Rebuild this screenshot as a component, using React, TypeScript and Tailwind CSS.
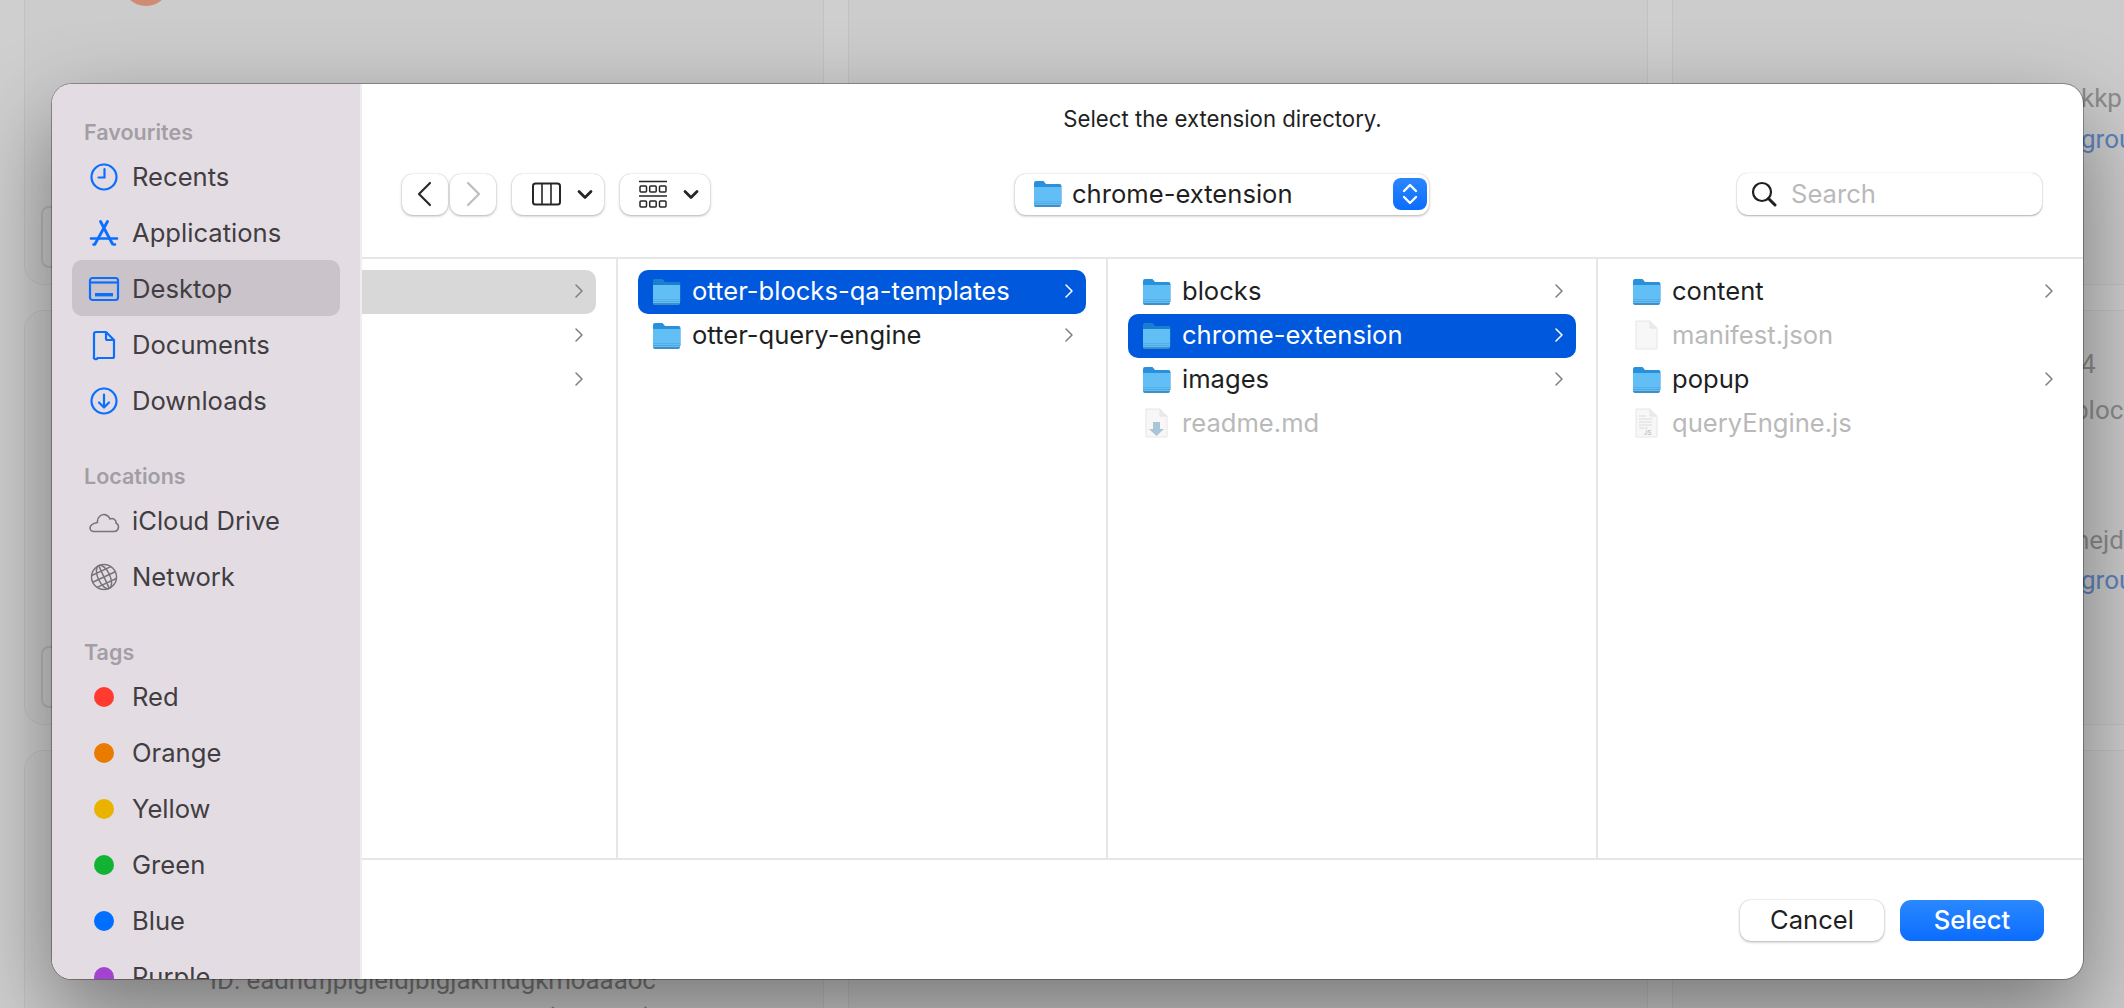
import type { ReactNode } from 'react'

// Finder-style "Select" sheet over a dimmed extensions page

const favourites = [
  { label: 'Recents', icon: <ClockIcon /> },
  { label: 'Applications', icon: <AppsIcon /> },
  { label: 'Desktop', icon: <DesktopIcon />, active: true },
  { label: 'Documents', icon: <DocIcon /> },
  { label: 'Downloads', icon: <DownloadIcon /> },
]

const locations = [
  { label: 'iCloud Drive', icon: <CloudIcon /> },
  { label: 'Network', icon: <GlobeIcon /> },
]

const tags = [
  { label: 'Red', dot: 'bg-[#ff3b30]' },
  { label: 'Orange', dot: 'bg-[#e87b00]' },
  { label: 'Yellow', dot: 'bg-[#e9b300]' },
  { label: 'Green', dot: 'bg-[#12b332]' },
  { label: 'Blue', dot: 'bg-[#006fff]' },
  { label: 'Purple', dot: 'bg-[#a343d0]' },
]

function ClockIcon() {
  return (
    <svg width="32" height="32" viewBox="0 0 32 32" fill="none" stroke="#0a6fff" strokeWidth="2.2" strokeLinecap="round">
      <circle cx="16" cy="16" r="12.5" />
      <path d="M16.5 8v8.5H10.5" />
    </svg>
  )
}

function AppsIcon() {
  return (
    <svg width="32" height="32" viewBox="0 0 32 32" fill="none" stroke="#0a6fff" strokeLinecap="round">
      <path d="M12.5 4.5 24.5 27M19.500 4.500 7 27" strokeWidth="2.8" />
      <path d="M3 21.5h26" strokeWidth="2.6" />
      <path d="M5.5 27.5h1M26 27.5h1" strokeWidth="2.6" />
    </svg>
  )
}

function DesktopIcon() {
  return (
    <svg width="32" height="32" viewBox="0 0 32 32" fill="none" stroke="#0a6fff" strokeWidth="2.2">
      <rect x="2" y="5" width="28" height="22" rx="2.5" />
      <path d="M2 9.5h28" />
      <rect x="7" y="20" width="18" height="3.4" fill="#0a6fff" stroke="none" />
    </svg>
  )
}

function DocIcon() {
  return (
    <svg width="32" height="32" viewBox="0 0 32 32" fill="none" stroke="#0a6fff" strokeWidth="2.2" strokeLinejoin="round">
      <path d="M8 3h10l8 8v16.5a1.5 1.5 0 0 1-1.5 1.5h-15A1.5 1.5 0 0 1 6 27.5V5a2 2 0 0 1 2-2Z" />
      <path d="M18 3v6.500a1.500 1.500 0 0 0 1.500 1.500H26" />
    </svg>
  )
}

function DownloadIcon() {
  return (
    <svg width="32" height="32" viewBox="0 0 32 32" fill="none" stroke="#0a6fff" strokeWidth="2.2" strokeLinecap="round" strokeLinejoin="round">
      <circle cx="16" cy="16" r="12.5" />
      <path d="M16 9.500v12.500M11 17.500l5 5 5-5" />
    </svg>
  )
}

function CloudIcon() {
  return (
    <svg width="32" height="32" viewBox="0 0 32 32" fill="none" stroke="#77747a" strokeWidth="1.6" strokeLinejoin="round">
      <path d="M6 26.500h20a4.500 4.500 0 0 0 2-8.500c.4-3.500-3.500-5.500-6-4-1.400-4.200-6.500-5.800-10-3-2 1.600-2.800 4-2.500 6.500C7 18 2 19.500 2 23a3.800 3.800 0 0 0 4 3.500Z" />
    </svg>
  )
}

function GlobeIcon() {
  return (
    <svg width="32" height="32" viewBox="0 0 32 32" fill="none" stroke="#77747a" strokeWidth="1.5">
      <circle cx="16" cy="16" r="12.5" />
      <g transform="rotate(-25 16 16)">
        <ellipse cx="16" cy="16" rx="6" ry="12.5" />
        <path d="M16 3.500v25M3.500 16h25M5.500 9.500h21M5.500 22.500h21" />
      </g>
    </svg>
  )
}

function FolderIcon({ selected = false }: { selected?: boolean }) {
  return (
    <svg width="29" height="27" viewBox="0 0 29 27" className="shrink-0">
      <path d="M1 3a2 2 0 0 1 2-2h7.500l2.500 3h13.500a2 2 0 0 1 2 2v18H1Z" fill={selected ? '#1b7fd0' : '#2a90dc'} />
      <path d="M1 7h27v17.500a2 2 0 0 1-2 2H3a2 2 0 0 1-2-2Z" fill="#62bff6" />
      <rect x="1" y="21" width="27" height="1" fill="#55b0e8" />
      <rect x="1" y="23" width="27" height="1" fill="#4fa8e0" />
      <path d="M1 25h27a2 2 0 0 1-2 2H3a2 2 0 0 1-2-2Z" fill="#3f8fc6" />
    </svg>
  )
}

function FileIcon({ kind }: { kind: 'plain' | 'md' | 'js' }) {
  return (
    <svg width="29" height="30" viewBox="0 0 29 30" className="shrink-0">
      <path d="M4 1h14l7 7v21H4Z" fill="#f7f7f7" stroke="#e6e6e6" />
      <path d="M18 1v7h7" fill="#ececec" stroke="#e2e2e2" />
      {kind === 'md' && <path d="M11 14h7v7h4l-7.500 7L7 21h4Z" fill="#a9c5d6" />}
      {kind === 'js' && (
        <>
          <path d="M7 8h7M7 11h13M7 14h13M7 17h13M7 20h9" stroke="#dcdcdc" strokeWidth="1" />
          <text x="12" y="27" fontSize="6" fill="#a8a8a8" fontFamily="Inter, sans-serif">JS</text>
        </>
      )}
    </svg>
  )
}

function Chevron({ color = '#7f7f7f' }: { color?: string }) {
  return (
    <svg width="10" height="16" viewBox="0 0 10 16" fill="none" stroke={color} strokeWidth="1.500" strokeLinecap="round" strokeLinejoin="round" className="shrink-0">
      <path d="M2 2l6 6-6 6" />
    </svg>
  )
}

function ToolButton({ className, children }: { className: string; children: ReactNode }) {
  return (
    <div className={`flex h-[41px] items-center rounded-[11px] bg-white shadow-[0_1px_3px_rgba(0,0,0,0.3),0_0_1px_rgba(0,0,0,0.2)] ${className}`}>
      {children}
    </div>
  )
}

const smallChevron = (
  <svg width="16" height="11" viewBox="0 0 16 11" fill="none" stroke="#262626" strokeWidth="2.800" strokeLinecap="round" strokeLinejoin="round">
    <path d="M2 2.500l6 6 6-6" />
  </svg>
)

function SideRow({ label, icon, active }: { label: string; icon: ReactNode; active?: boolean }) {
  return (
    <div className={`flex h-[56px] items-center gap-3 rounded-[10px] pl-4 pt-[2px] text-[25.6px] text-[#413d42] ${active ? 'bg-[#cac3c9]' : ''}`}>
      <span className="flex w-8 shrink-0 items-center justify-center">{icon}</span>
      {label}
    </div>
  )
}

function SideLabel({ children, first }: { children: ReactNode; first?: boolean }) {
  return (
    <div className={`mb-[2px] flex h-[30px] items-center pl-3 pt-[2px] text-[21.5px] font-semibold text-[#a39ea5] ${first ? '' : 'mt-8'}`}>
      {children}
    </div>
  )
}

type Item = { name: string; folder?: boolean; file?: 'plain' | 'md' | 'js'; selected?: boolean }

function FileRow({ item }: { item: Item }) {
  const textColor = item.selected ? 'text-white' : item.folder ? 'text-[#1f1f1f]' : 'text-[#b9b9b9]'
  return (
    <div className={`flex h-[44px] items-center rounded-[10px] pb-[2px] pl-[14px] pr-3 text-[25.6px] ${textColor} ${item.selected ? 'bg-[#0058dd]' : ''}`}>
      {item.folder ? <FolderIcon selected={item.selected} /> : <FileIcon kind={item.file ?? 'plain'} />}
      <span className="ml-[11px] flex-1 whitespace-nowrap">{item.name}</span>
      {item.folder && <Chevron color={item.selected ? '#ffffff' : '#7f7f7f'} />}
    </div>
  )
}

function Column({ items, className }: { items: Item[]; className: string }) {
  return (
    <div className={`pt-[11px] ${className}`}>
      {items.map((item) => (
        <FileRow key={item.name} item={item} />
      ))}
    </div>
  )
}

function Sheet() {
  return (
    <div className="absolute left-[52px] top-[84px] flex h-[895px] w-[2031px] overflow-hidden rounded-[20px] bg-white shadow-[0_0_0_1px_rgba(0,0,0,0.3)] [font-family:Inter,sans-serif]">
      {/* Sidebar */}
      <div className="w-[308px] shrink-0 overflow-hidden bg-[#e3dde3] px-5 pt-8">
        <SideLabel first>Favourites</SideLabel>
        {favourites.map((row) => (
          <SideRow key={row.label} {...row} />
        ))}
        <SideLabel>Locations</SideLabel>
        {locations.map((row) => (
          <SideRow key={row.label} {...row} />
        ))}
        <SideLabel>Tags</SideLabel>
        {tags.map((tag) => (
          <SideRow
            key={tag.label}
            label={tag.label}
            icon={<span className={`h-5 w-5 rounded-full ${tag.dot}`} />}
          />
        ))}
      </div>

      {/* Main */}
      <div className="flex min-w-0 flex-1 flex-col border-l-2 border-[#eeeeee]">
        <div className="h-[175px] shrink-0 border-b-2 border-[#e6e6e6]">
          <div className="flex h-[89px] items-start justify-center pt-[18px] text-[22.2px] text-[#1f1f1f]">
            Select the extension directory.
          </div>
          <div className="grid grid-cols-[1fr_414px_1fr] items-center pl-[40px] pr-[41px]">
            <div className="flex">
              <ToolButton className="w-[46px] justify-center">
                <svg width="18" height="26" viewBox="0 0 18 26" fill="none" stroke="#2a2a2a" strokeWidth="2.200" strokeLinecap="round" strokeLinejoin="round">
                  <path d="M14 2 3 13l11 11" />
                </svg>
              </ToolButton>
              <ToolButton className="ml-[2px] w-[46px] justify-center">
                <svg width="18" height="26" viewBox="0 0 18 26" fill="none" stroke="#bdbdbd" strokeWidth="2.200" strokeLinecap="round" strokeLinejoin="round">
                  <path d="m4 2 11 11L4 24" />
                </svg>
              </ToolButton>
              <ToolButton className="ml-4 w-[92px] gap-[16px] pl-[20px]">
                <svg width="29" height="24" viewBox="0 0 29 24" fill="none" stroke="#262626" strokeWidth="2">
                  <rect x="1" y="1.500" width="27" height="21" rx="2.500" />
                  <path d="M10 1.500v21M19 1.500v21" strokeWidth="1.600" />
                </svg>
                {smallChevron}
              </ToolButton>
              <ToolButton className="ml-4 w-[90px] gap-4 pl-[19px]">
                <svg width="28" height="28" viewBox="0 0 28 28" fill="none" stroke="#262626">
                  <path d="M0 1.500h28M0 16h28" strokeWidth="1.700" />
                  <g strokeWidth="1.500">
                    <rect x="1" y="6" width="6.500" height="6" rx="1" />
                    <rect x="10.700" y="6" width="6.500" height="6" rx="1" />
                    <rect x="20.500" y="6" width="6.500" height="6" rx="1" />
                    <rect x="1" y="21" width="6.500" height="6" rx="1" />
                    <rect x="10.700" y="21" width="6.500" height="6" rx="1" />
                    <rect x="20.500" y="21" width="6.500" height="6" rx="1" />
                  </g>
                </svg>
                {smallChevron}
              </ToolButton>
            </div>

            {/* Path pop-up */}
            <ToolButton className="justify-between pl-[18px] pr-[2px]">
              <span className="flex items-center gap-[10px] text-[25.6px] text-[#1f1f1f]">
                <FolderIcon />
                chrome-extension
              </span>
              <span className="flex h-8 w-[34px] items-center justify-center rounded-[8px] bg-gradient-to-b from-[#2a86ff] to-[#0a6cff]">
                <svg width="18" height="26" viewBox="0 0 18 26" fill="none" stroke="#ffffff" strokeWidth="2.400" strokeLinecap="round" strokeLinejoin="round">
                  <path d="M3 10l6-6 6 6M3 16l6 6 6-6" />
                </svg>
              </span>
            </ToolButton>

            <div className="flex justify-end">
              <div className="flex h-[42px] w-[305px] items-center gap-[14px] rounded-[11px] bg-white pl-[14px] shadow-[0_1px_2px_rgba(0,0,0,0.3),0_0_1px_rgba(0,0,0,0.25)]">
                <svg width="26" height="26" viewBox="0 0 26 26" fill="none" stroke="#1f1f1f" strokeLinecap="round">
                  <circle cx="11" cy="11" r="9" strokeWidth="2.200" />
                  <path d="m17.500 17.500 6.500 6.500" strokeWidth="3" />
                </svg>
                <span className="text-[25.6px] text-[#b9b9b9]">Search</span>
              </div>
            </div>
          </div>
        </div>

        {/* Browser columns */}
        <div className="flex min-h-0 flex-1">
          <div className="w-[256px] shrink-0 border-r-2 border-[#e6e6e6] pr-5 pt-[11px]">
            <div className="flex h-[44px] items-center justify-end rounded-r-[10px] bg-[#d8d8d8] pb-[2px] pr-3">
              <Chevron />
            </div>
            <div className="flex h-[44px] items-center justify-end pb-[2px] pr-3">
              <Chevron />
            </div>
            <div className="flex h-[44px] items-center justify-end pb-[2px] pr-3">
              <Chevron />
            </div>
          </div>
          <Column
            className="w-[490px] shrink-0 border-r-2 border-[#e6e6e6] px-5"
            items={[
              { name: 'otter-blocks-qa-templates', folder: true, selected: true },
              { name: 'otter-query-engine', folder: true },
            ]}
          />
          <Column
            className="w-[490px] shrink-0 border-r-2 border-[#e6e6e6] px-5"
            items={[
              { name: 'blocks', folder: true },
              { name: 'chrome-extension', folder: true, selected: true },
              { name: 'images', folder: true },
              { name: 'readme.md', file: 'md' },
            ]}
          />
          <Column
            className="flex-1 pl-5 pr-[17px]"
            items={[
              { name: 'content', folder: true },
              { name: 'manifest.json', file: 'plain' },
              { name: 'popup', folder: true },
              { name: 'queryEngine.js', file: 'js' },
            ]}
          />
        </div>

        {/* Footer */}
        <div className="flex h-[121px] shrink-0 items-start justify-end gap-4 border-t-2 border-[#e6e6e6] pr-[39px] pt-[40px] text-[25.6px]">
          <button className="h-[41px] w-[144px] rounded-[11px] bg-white text-[#1f1f1f] shadow-[0_1px_3px_rgba(0,0,0,0.3),0_0_1px_rgba(0,0,0,0.25)]">
            Cancel
          </button>
          <button className="h-[41px] w-[144px] rounded-[11px] bg-gradient-to-b from-[#2a88ff] to-[#0a6cff] font-medium text-white">
            Select
          </button>
        </div>
      </div>
    </div>
  )
}

function PageCard({ className = '', children }: { className?: string; children?: ReactNode }) {
  return (
    <div className={`flex h-[415px] flex-col overflow-hidden rounded-[20px] border border-[#c2c2c2] bg-[#cccccc] ${className}`}>
      {children}
    </div>
  )
}

const cardButton = <div className="ml-4 mt-auto mb-[16px] h-[62px] w-[150px] shrink-0 rounded-[8px] border-2 border-[#b8b8b8]" />

export default function App() {
  return (
    <div className="relative h-[1008px] w-[2124px] overflow-hidden bg-[#cfcfcf] [font-family:Roboto,sans-serif]">
      {/* Dimmed page behind the sheet */}
      <div className="-mt-[130px] grid w-[2472px] grid-cols-[800px_800px_800px] gap-x-6 gap-y-[25px] pl-6">
        <PageCard>
          <div className="ml-[97px] mt-[87px] h-12 w-12 shrink-0 rounded-full bg-[#d08b75]" />
          {cardButton}
        </PageCard>
        <PageCard />
        <PageCard className="pl-[408px] text-[26px]">
          <div className="mt-[208px] leading-[38px] text-[#8c8c8c]">kkp</div>
          <div className="mt-[3px] leading-[38px] text-[#5f83bd]">grou</div>
        </PageCard>
        <PageCard>{cardButton}</PageCard>
        <PageCard />
        <PageCard className="pl-[408px] text-[26px] text-[#8c8c8c]">
          <div className="mt-[38px] leading-[30px]">4</div>
          <div className="-ml-[7px] mt-[16px] leading-[30px]">bloc</div>
          <div className="-ml-[6px] mt-[96px] leading-[38px]">hejd</div>
          <div className="mt-[2px] leading-[38px] text-[#5f83bd]">grou</div>
        </PageCard>
        <PageCard className="pl-[185px] text-[25.8px] text-[#7a7a7a]">
          <div className="mt-[212px] leading-[34px]">ID: eadndfjplgieldjblgjakmdgkmoaaaoc</div>
          <div className="leading-[42px]">
            Inspect views <span className="text-[#5f83bd]">service worker (Inactive)</span>
          </div>
        </PageCard>
        <PageCard />
        <PageCard />
      </div>

      {/* Soft drop shadow of the sheet, kept apart so it can sit under the ring */}
      <div className="absolute left-[52px] top-[84px] h-[895px] w-[2031px] rounded-[20px] shadow-[0_36px_90px_rgba(0,0,0,0.42)]" />
      <Sheet />
    </div>
  )
}
